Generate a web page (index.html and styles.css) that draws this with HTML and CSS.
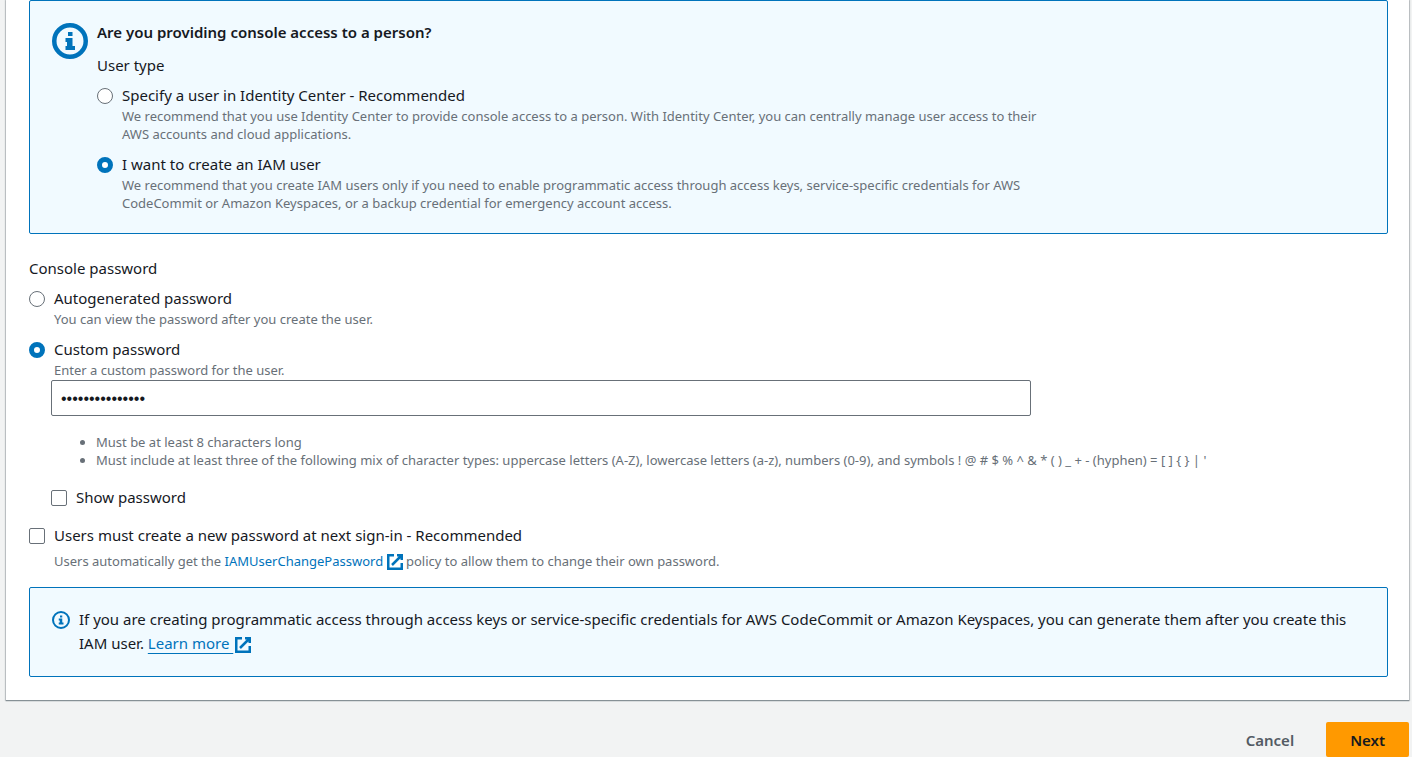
FILE: index.html
```
<!DOCTYPE html>
<html lang="en">
<head>
<meta charset="utf-8">
<title>Specify user details</title>
<meta name="viewport" content="width=device-width, initial-scale=1">
<link rel="stylesheet" href="styles.css">
</head>
<body>
<form class="page">
  <main class="card">
    <section class="alert alert-large">
      <svg class="icon-large" viewBox="0 0 36 36" aria-hidden="true">
        <circle cx="18" cy="18" r="15.75" fill="none" stroke="currentColor" stroke-width="4.5"/>
        <path fill="currentColor" d="M16 9h4.500v4H16zM13.500 15h7v8H23v4H13.500v-4H15v-4h-1.500z"/>
      </svg>
      <div class="alert-body">
        <h2 class="title">Are you providing console access to a person?</h2>
        <fieldset class="group">
          <legend class="legend">User type</legend>
          <div class="option">
            <input class="control radio" type="radio" name="user-type" id="identity-center">
            <div>
              <label class="label" for="identity-center">Specify a user in Identity Center - Recommended</label>
              <p class="description">We recommend that you use Identity Center to provide console access to a person. With Identity Center, you can centrally manage user access to their<br>AWS accounts and cloud applications.</p>
            </div>
          </div>
          <div class="option">
            <input class="control radio" type="radio" name="user-type" id="iam-user" checked>
            <div>
              <label class="label" for="iam-user">I want to create an IAM user</label>
              <p class="description">We recommend that you create IAM users only if you need to enable programmatic access through access keys, service-specific credentials for AWS<br>CodeCommit or Amazon Keyspaces, or a backup credential for emergency account access.</p>
            </div>
          </div>
        </fieldset>
      </div>
    </section>

    <fieldset class="group">
      <legend class="legend">Console password</legend>
      <div class="option">
        <input class="control radio" type="radio" name="password-type" id="autogenerated">
        <div>
          <label class="label" for="autogenerated">Autogenerated password</label>
          <p class="description">You can view the password after you create the user.</p>
        </div>
      </div>
      <div class="option">
        <input class="control radio" type="radio" name="password-type" id="custom" checked>
        <div>
          <label class="label" for="custom">Custom password</label>
          <p class="description">Enter a custom password for the user.</p>
        </div>
      </div>
    </fieldset>

    <div class="custom-password">
      <input class="password" type="password" aria-label="Custom password" value="Passw0rd-Sample" autocomplete="off">
      <ul class="rules">
        <li>Must be at least 8 characters long</li>
        <li>Must include at least three of the following mix of character types: uppercase letters (A-Z), lowercase letters (a-z), numbers (0-9), and symbols ! @ # $ % ^ &amp; * ( ) _ + - (hyphen) = [ ] { } | '</li>
      </ul>
      <div class="option">
        <input class="control checkbox" type="checkbox" id="show-password">
        <label class="label" for="show-password">Show password</label>
      </div>
    </div>

    <div class="option reset-option">
      <input class="control checkbox" type="checkbox" id="reset">
      <div>
        <label class="label" for="reset">Users must create a new password at next sign-in - Recommended</label>
        <p class="description policy">Users automatically get the <a class="link" href="#policy">IAMUserChangePassword</a> <svg class="external" viewBox="0 0 16 16" aria-hidden="true"><path fill="none" stroke="currentColor" stroke-width="2.500" d="M7 1.250H1.250v13.500h13.500V9M10 1.250h4.750V6M14.500 1.500L5 11"/></svg> policy to allow them to change their own password.</p>
      </div>
    </div>

    <section class="alert">
      <svg class="icon-small" viewBox="0 0 18 18" aria-hidden="true">
        <circle cx="9" cy="9" r="8" fill="none" stroke="currentColor" stroke-width="2"/>
        <path fill="currentColor" d="M8 4.500h2.250v2H8zM6.750 7.500h3.500v4h1.250v2H6.750v-2H7.750v-2h-1z"/>
      </svg>
      <p class="notice">If you are creating programmatic access through access keys or service-specific credentials for AWS CodeCommit or Amazon Keyspaces, you can generate them after you create this IAM user. <a class="link underlined" href="#learn-more">Learn more&nbsp;</a><svg class="external" viewBox="0 0 16 16" aria-hidden="true"><path fill="none" stroke="currentColor" stroke-width="2.500" d="M7 1.250H1.250v13.500h13.500V9M10 1.250h4.750V6M14.500 1.500L5 11"/></svg></p>
    </section>
  </main>

  <footer class="actions">
    <button class="button" type="button">Cancel</button>
    <button class="button primary" type="submit">Next</button>
  </footer>
</form>
</body>
</html>
```
FILE: styles.css
```
* {
  box-sizing: border-box;
}

body {
  margin: 0;
  background: #f2f3f3;
  color: #16191f;
  font: 15px/24px "Noto Sans", "Open Sans", sans-serif;
}

h2, p, ul, fieldset {
  margin: 0;
  padding: 0;
  border: 0;
}

.page {
  padding: 0 3px 0 6px;
}

.card {
  padding: 0 21px 23px 23px;
  background: #fff;
  box-shadow: 0 1px 1px #879196, 0 0 1px 1px #c4c8ca;
}

.alert {
  display: flex;
  gap: 9px;
  padding: 19px 22px 21px;
  background: #f1faff;
  border: 1px solid #0073bb;
  border-radius: 2px;
}

.alert-large {
  margin-bottom: 22px;
}

.icon-large,
.icon-small {
  flex: none;
  color: #0073bb;
}

.icon-large {
  width: 36px;
  height: 36px;
  margin-top: 3px;
}

.icon-small {
  width: 18px;
  height: 18px;
  margin-top: 4px;
}

.alert-body {
  flex: 1;
}

.title {
  margin-bottom: 9px;
  font-size: 15px;
  font-weight: 600;
}

.group {
  min-width: 0;
}

.legend {
  display: block;
  margin-bottom: 6px;
  padding: 0;
}

.option {
  display: flex;
  gap: 9px;
}

.option + .option {
  margin-top: 9px;
}

.label {
  display: block;
}

.description {
  color: #687078;
  font-size: 13px;
  line-height: 18px;
}

.control {
  appearance: none;
  flex: none;
  width: 16px;
  height: 16px;
  margin: 5px 0 0;
  background: #fff;
  border: 1px solid #687078;
}

.radio {
  border-radius: 50%;
}

.radio:checked {
  border: 5px solid #0073bb;
}

.checkbox {
  border-radius: 2px;
}

.custom-password {
  margin: 1px 0 0 22px;
}

.password {
  display: block;
  width: 100%;
  max-width: 980px;
  height: 36px;
  padding: 2px 9px 0;
  color: #16191f;
  background: #fff;
  border: 1px solid #687078;
  border-radius: 2px;
  font: 16px "Liberation Sans", sans-serif;
}

.rules {
  margin: 17px 0 16px;
  padding-left: 45px;
  color: #687078;
  font-size: 13px;
  line-height: 18px;
}

.reset-option {
  margin: 14px 0 17px;
}

.policy {
  margin-top: 5px;
}

.link {
  color: #0073bb;
  text-decoration: none;
}

.underlined {
  text-decoration: underline;
  text-decoration-thickness: 1px;
  text-underline-offset: 4px;
}

.external {
  width: 16px;
  height: 16px;
  color: #0073bb;
  vertical-align: -4px;
}

.notice .external {
  margin-left: 2px;
}

.actions {
  display: flex;
  justify-content: flex-end;
  gap: 8px;
  padding-top: 22px;
}

.button {
  height: 35px;
  padding: 0 24px;
  color: #545b64;
  background: none;
  border: 0;
  border-radius: 2px;
  font: inherit;
  font-weight: 600;
}

.primary {
  color: #16191f;
  background: #ff9900;
}
```
